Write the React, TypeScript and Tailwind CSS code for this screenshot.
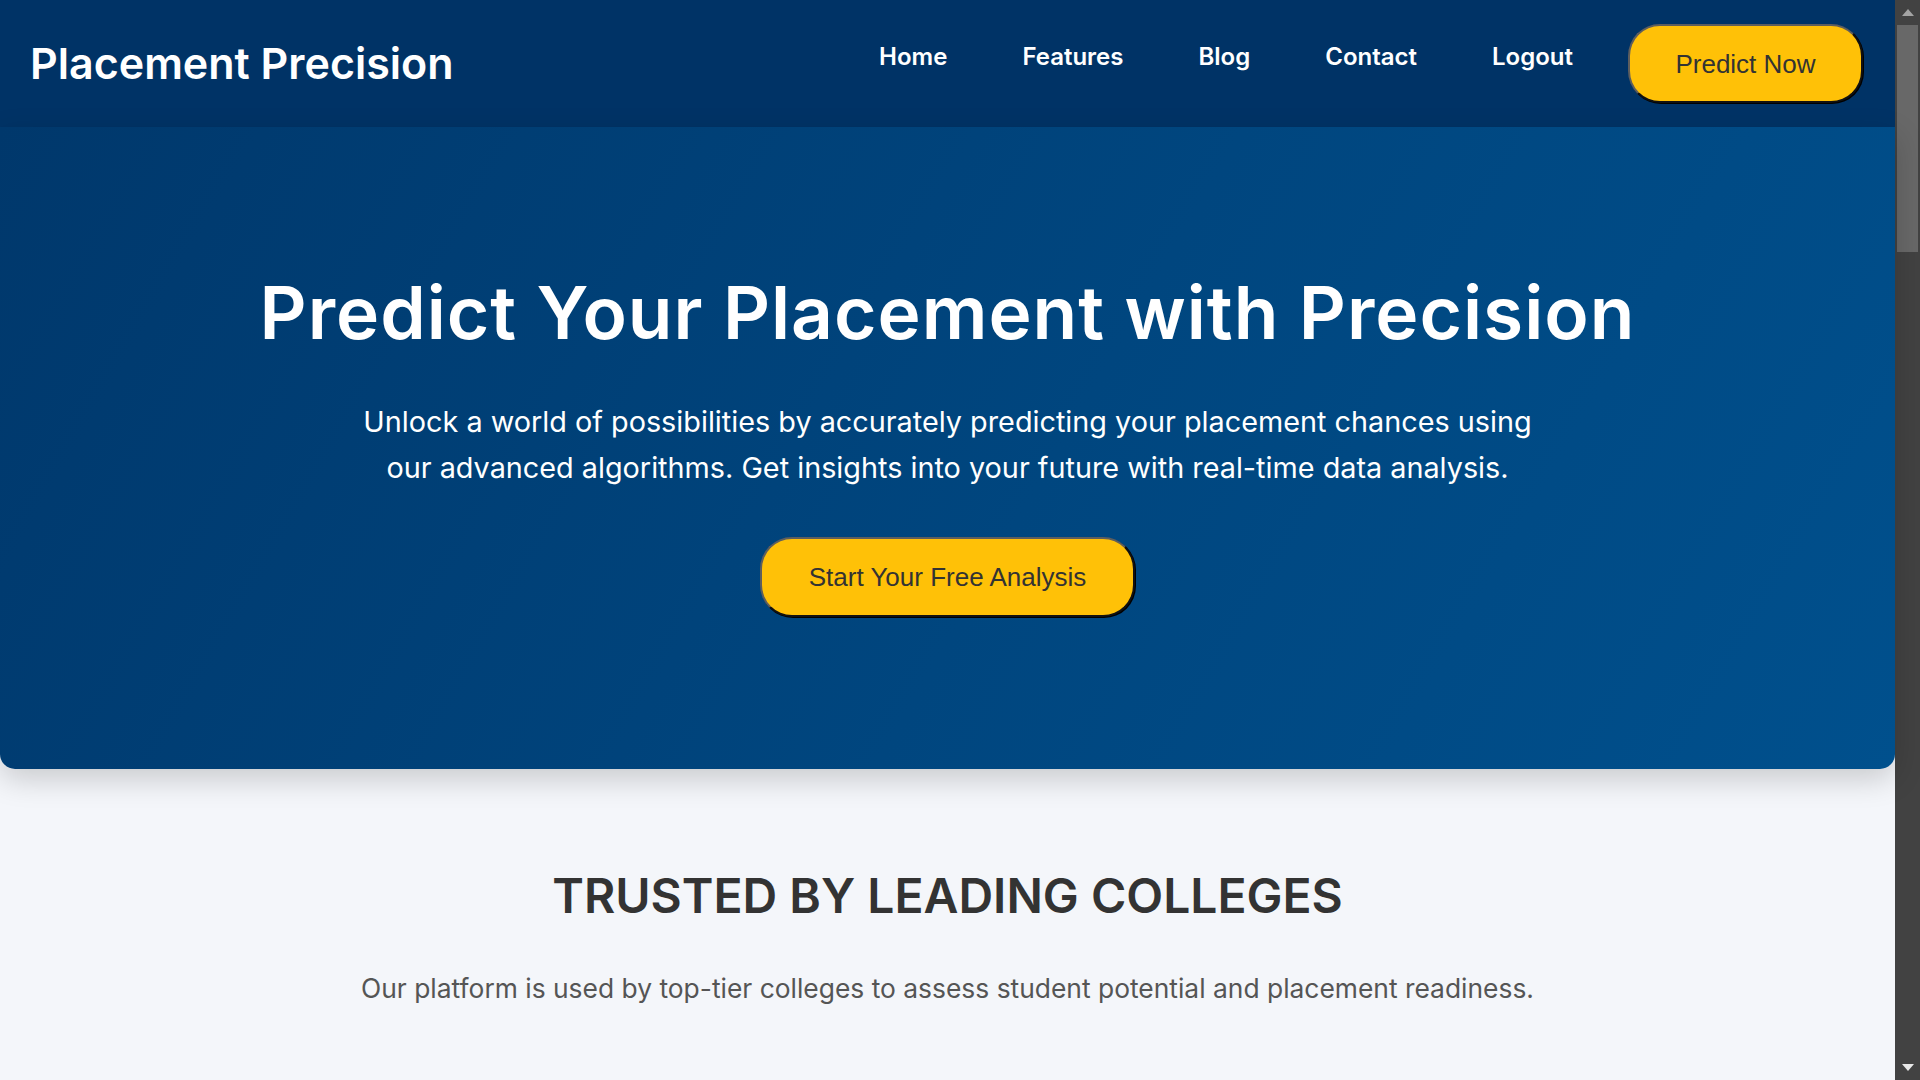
import React from "react";

const navItems = ["Home", "Features", "Blog", "Contact", "Logout"];

function PillButton({ children, className = "" }: { children: React.ReactNode; className?: string }) {
  return (
    <button
      className={
        "bg-[#ffc107] text-[#333333] rounded-[32px] border-2 border-t-[#5e5e5e] border-l-[#5e5e5e] border-r-[#111111] border-b-[#111111] shadow-[1px_1px_0_#000] text-[26px] leading-[30px] font-normal whitespace-nowrap " +
        className
      }
      style={{ fontFamily: '"Liberation Sans", Arial, sans-serif' }}
    >
      {children}
    </button>
  );
}

export default function App() {
  return (
    <div
      className="h-screen w-full flex overflow-hidden bg-[#f4f6fa]"
      style={{ fontFamily: 'Inter, "Noto Sans", sans-serif' }}
    >
      <div className="flex-1 min-w-0 flex flex-col">
        <header className="h-[127px] shrink-0 bg-[#003366] flex items-center justify-between pl-[30px] pr-[32px]">
          <div className="text-white text-[43px] font-semibold leading-none">Placement Precision</div>
          <nav className="flex items-center">
            <ul className="flex items-center gap-[75px] mb-[13px]">
              {navItems.map((n) => (
                <li key={n} className="text-white text-[24px] font-semibold leading-none">
                  {n}
                </li>
              ))}
            </ul>
            <PillButton className="ml-[55px] w-[235px] h-[79px]">Predict Now</PillButton>
          </nav>
        </header>

        <section className="relative z-10 shrink-0 rounded-b-[15px] bg-[linear-gradient(120deg,#00386c_0%,#00467f_55%,#00508d_100%)] shadow-[0_10px_30px_rgba(0,0,0,0.18)] pt-[143px] pb-[152px] flex flex-col items-center text-center">
          <h1 className="text-white text-[73px] font-semibold leading-[86px] tracking-[1px]">
            Predict Your Placement with Precision
          </h1>
          <p className="mt-[43px] max-w-[1200px] text-white text-[28.8px] leading-[46px] font-normal">
            Unlock a world of possibilities by accurately predicting your placement chances using our advanced
            algorithms. Get insights into your future with real-time data analysis.
          </p>
          <PillButton className="mt-[46px] w-[375px] h-[80px]">Start Your Free Analysis</PillButton>
        </section>

        <section className="flex flex-col items-center text-center pt-[98px]">
          <h2 className="text-[#333333] text-[48px] font-semibold leading-[58px]">TRUSTED BY LEADING COLLEGES</h2>
          <p className="mt-[45px] text-[#555555] text-[26.4px] leading-[36px]">
            Our platform is used by top-tier colleges to assess student potential and placement readiness.
          </p>
        </section>
      </div>

      <div className="w-[25px] shrink-0 bg-[#424242] flex flex-col items-center">
        <div className="h-[25px] flex items-center justify-center">
          <svg width="12" height="7" viewBox="0 0 12 7">
            <polygon points="6,0 12,7 0,7" fill="#a3a3a3" />
          </svg>
        </div>
        <div className="w-[21px] h-[227px] bg-[#686868]" />
        <div className="flex-1" />
        <div className="h-[25px] flex items-center justify-center">
          <svg width="12" height="7" viewBox="0 0 12 7">
            <polygon points="0,0 12,0 6,7" fill="#e8e8e8" />
          </svg>
        </div>
      </div>
    </div>
  );
}
